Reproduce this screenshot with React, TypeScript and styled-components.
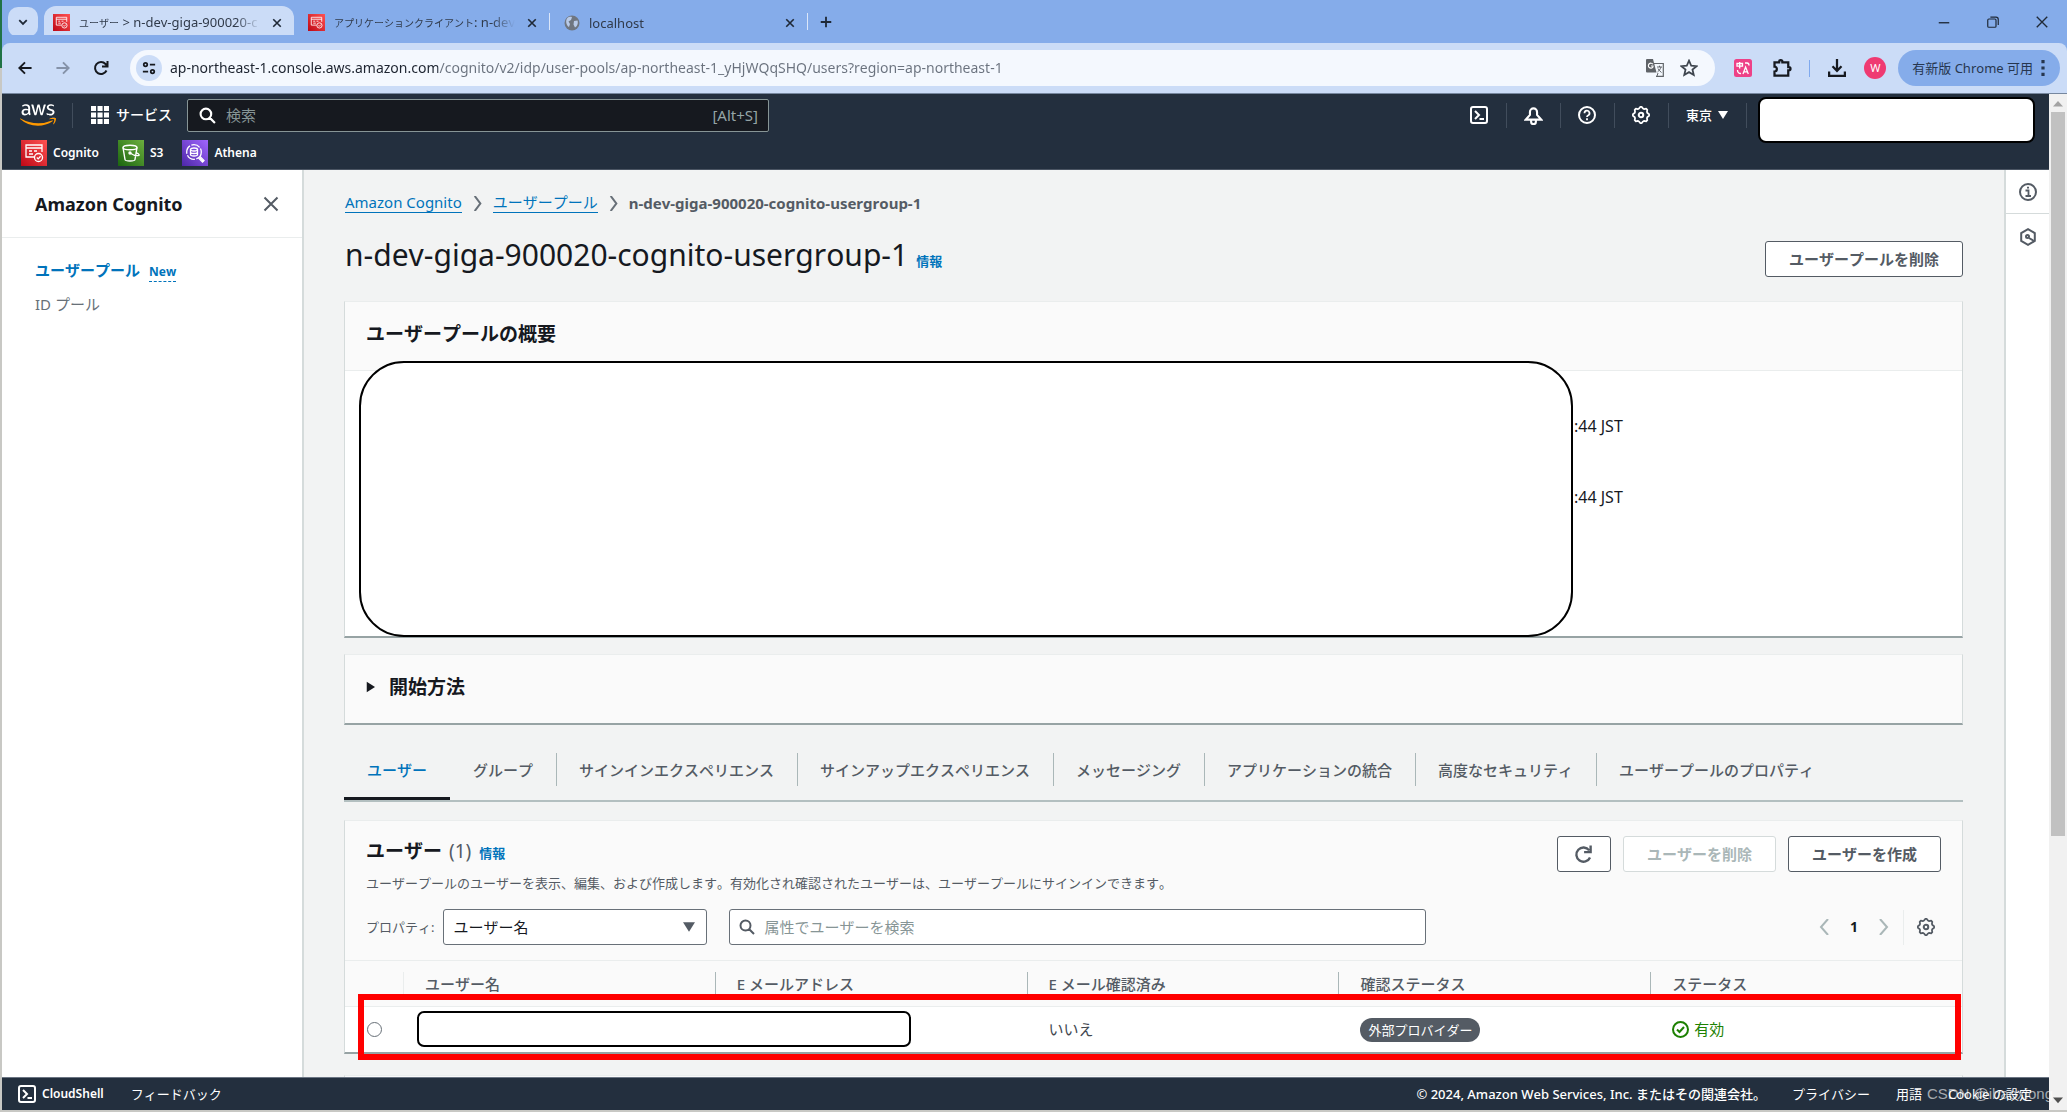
import React from "react";
import styled, { createGlobalStyle, css } from "styled-components";
import { FaAws } from "react-icons/fa";

const GlobalStyle = createGlobalStyle`
  *, *::before, *::after { box-sizing: border-box; }
  html, body { margin: 0; padding: 0; }
  body {
    font-family: "Noto Sans", "Noto Sans CJK JP", sans-serif;
    font-size: 15px;
    font-kerning: none;
    line-height: 24px;
    color: #16191f;
    overflow: hidden;
  }
  button, input, select { font: inherit; font-kerning: none; color: inherit; margin: 0; }
  button { cursor: pointer; border: 0; background: none; padding: 0; }
  a { text-decoration: none; color: #0073bb; }
  svg { display: block; flex: none; }
  h1, h2, p { margin: 0; }
`;

/* ---------- browser frame ---------- */

const Frame = styled.div`
  display: flex;
  flex-direction: column;
  height: 100vh;
  padding: 0 0 2px 2px;
  background: linear-gradient(#217346 68px, #c8c8c4 68px);
`;

const TabStrip = styled.div`
  display: flex;
  align-items: center;
  height: 43px;
  background: #85acea;
  padding-left: 6px;
  color: #1f2937;
`;

const TabSearch = styled.button`
  display: grid;
  place-items: center;
  width: 30px;
  height: 30px;
  border-radius: 10px;
  background: #cbdcf7;
`;

const Tab = styled.div<{ $active?: boolean; $width: number }>`
  display: flex;
  align-items: center;
  gap: 9px;
  width: ${(p) => p.$width}px;
  align-self: stretch;
  margin-top: 6px;
  margin-left: ${(p) => (p.$active ? 6 : 0)}px;
  padding: 0 9px 4px ${(p) => (p.$active ? 9 : 14)}px;
  border-radius: 12px 12px 0 0;
  background: ${(p) => (p.$active ? "#cbdcf7" : "transparent")};
`;

const TabTitle = styled.button`
  flex: 1;
  min-width: 0;
  overflow: hidden;
  white-space: nowrap;
  text-align: left;
  font-size: 13px;
  line-height: 20px;
  color: #303a4a;
  mask-image: linear-gradient(90deg, #000 calc(100% - 24px), transparent);
`;

const Kana = styled.span`
  font-size: 10px;
`;

const IconButton = styled.button<{ $w?: number }>`
  display: grid;
  place-items: center;
  width: ${(p) => p.$w ?? 24}px;
  height: 24px;
  flex: none;
`;

const Divider = styled.span<{ $color?: string; $h?: number }>`
  width: 1px;
  height: ${(p) => p.$h ?? 17}px;
  flex: none;
  background: ${(p) => p.$color ?? "#dbe6f9"};
`;

const WindowControls = styled.div`
  display: flex;
  gap: 25px;
  margin-left: auto;
  padding-right: 13px;
`;

const Toolbar = styled.div`
  display: flex;
  align-items: center;
  height: 51px;
  padding: 0 7px 0 11px;
  background: #cbdcf7;
  border-bottom: 1px solid #76879f;
  border-radius: 8px 8px 0 0;
  box-shadow: 0 -8px 0 0 #85acea;
`;

const HistoryButtons = styled.div`
  display: flex;
  gap: 14px;
  margin-right: 17px;
`;

const Omnibox = styled.label`
  display: flex;
  flex: 1;
  align-items: center;
  height: 36px;
  padding: 0 12px 0 6px;
  border-radius: 18px;
  background: #f4f8fe;
`;

const SiteInfo = styled.span`
  display: grid;
  place-items: center;
  width: 26px;
  height: 26px;
  border-radius: 13px;
  background: #cbdcf7;
`;

const Address = styled.input`
  flex: 1;
  min-width: 0;
  padding: 0 8px;
  border: 0;
  outline: 0;
  font-size: 14px;
  color: #5d6673;
  background: linear-gradient(90deg, #1d2430 276px, #6a727e 276px);
  background-clip: text;
  -webkit-text-fill-color: transparent;
`;

const ToolbarIcons = styled.div`
  display: flex;
  align-items: center;
  gap: 15px;
  padding: 0 12px 0 16px;
`;

const Avatar = styled.span`
  width: 22px;
  height: 22px;
  border-radius: 50%;
  background: #ef3a72;
  color: #fff;
  font-size: 11px;
  line-height: 22px;
  text-align: center;
`;

const UpdatePill = styled.button`
  display: flex;
  align-items: center;
  gap: 2px;
  height: 36px;
  padding: 0 9px 0 14px;
  border-radius: 18px;
  background: #85acea;
  color: #26364f;
  font-family: "Noto Sans", "Noto Sans CJK SC", sans-serif;
  font-size: 13px;
  white-space: nowrap;
`;

const Viewport = styled.div`
  display: flex;
  flex: 1;
  min-height: 0;
`;

const ScrollTrack = styled.div`
  display: flex;
  flex-direction: column;
  align-items: center;
  width: 18px;
  padding: 5px 0;
  background: #f1f1f1;
`;

const ScrollThumb = styled.div`
  width: 14px;
  flex: 0 0 72%;
  margin: 3px 0 auto;
  background: #c1c1c1;
`;

/* ---------- console navigation ---------- */

const Console = styled.div`
  display: flex;
  flex: 1;
  flex-direction: column;
  min-width: 0;
`;

const Nav = styled.header`
  background: #232f3e;
  color: #fff;
  border-bottom: 1px solid #4b5563;
`;

const NavRow = styled.div`
  display: flex;
  align-items: center;
  height: 42px;
  padding: 0 14px 0 18px;
`;

const AwsLogo = styled.a`
  display: flex;
  margin-right: 16px;
  svg path { fill: url(#awsFill); }
`;

const Services = styled.button`
  display: flex;
  align-items: center;
  gap: 7px;
  margin: 0 15px 0 18px;
  font-size: 14px;
  font-weight: 500;
  color: #fff;
`;

const NavSearch = styled.label`
  display: flex;
  align-items: center;
  gap: 10px;
  width: 582px;
  height: 33px;
  padding: 0 10px 0 11px;
  border: 1px solid #879596;
  border-radius: 2px;
  background: #16191f;
  color: #95a5a6;
`;

const PlainInput = styled.input`
  flex: 1;
  min-width: 0;
  padding: 0;
  border: 0;
  outline: 0;
  background: transparent;
  &::placeholder { color: #879596; opacity: 1; }
`;

const NavTools = styled.div`
  display: flex;
  align-items: center;
  gap: 15px;
  margin-left: auto;
  > button:not(:last-of-type) { width: 23px; }
`;

const Region = styled.button`
  display: flex;
  align-items: center;
  gap: 6px;
  margin: 0 3px 0 2px;
  font-size: 13px;
  font-weight: 500;
`;

/* blank rounded covers over private values */
const cover = css`
  border: 2px solid #000;
  background: #fff;
`;

const AccountCover = styled.div`
  ${cover}
  width: 277px;
  height: 46px;
  margin: 5px 0 -4px -4px;
  border-radius: 8px;
`;

const Favorites = styled.nav`
  display: flex;
  align-items: flex-start;
  gap: 19px;
  height: 33px;
  padding: 4px 19px 0;
`;

const Favorite = styled.a`
  display: flex;
  align-items: center;
  gap: 6px;
  color: #fff;
  font-size: 12px;
  font-weight: 600;
`;

/* ---------- page body ---------- */

const Body = styled.div`
  display: flex;
  flex: 1;
  min-height: 0;
  overflow: hidden;
  background: #f2f3f3;
`;

const Side = styled.aside`
  width: 302px;
  flex: none;
  background: #fff;
  border-right: 2px solid #d5dbdb;
`;

const SideHeader = styled.div`
  display: flex;
  align-items: center;
  justify-content: space-between;
  height: 68px;
  padding: 0 19px 0 33px;
  border-bottom: 1px solid #eaeded;
  font-size: 18px;
  font-weight: 700;
`;

const SideList = styled.ul`
  display: flex;
  flex-direction: column;
  gap: 8px;
  margin: 0;
  padding: 20px 33px;
  list-style: none;
`;

const SideLink = styled.a<{ $active?: boolean }>`
  color: ${(p) => (p.$active ? "#0073bb" : "#687078")};
  font-weight: ${(p) => (p.$active ? 700 : 400)};
`;

const NewBadge = styled.a`
  margin-left: 9px;
  font-size: 12px;
  font-weight: 700;
  border-bottom: 1px dashed #0073bb;
  padding-bottom: 1px;
`;

const Main = styled.main`
  flex: 1;
  min-width: 0;
  padding: 21px 41px 0 40px;
  overflow: hidden;
`;

const Crumbs = styled.nav`
  display: flex;
  align-items: center;
  gap: 8px;
  height: 24px;
  padding-left: 1px;
  line-height: 19px;
  a { color: #0073bb; border-bottom: 1px solid #0073bb; }
  span { color: #545b64; font-weight: 700; }
`;

const TitleRow = styled.div`
  display: flex;
  align-items: flex-start;
  justify-content: space-between;
  height: 86px;
  padding: 18px 0 0 1px;
`;

const Title = styled.h1`
  font-size: 30px;
  line-height: 44px;
  font-weight: 400;
`;

const InfoLink = styled.a`
  margin-left: 8px;
  font-size: 13px;
  font-weight: 700;
`;

const Button = styled.button<{ $push?: number }>`
  height: 36px;
  padding: 0 23px;
  margin-top: ${(p) => p.$push ?? 0}px;
  border: 1px solid #545b64;
  border-radius: 3px;
  background: #fff;
  color: #545b64;
  font-size: 15px;
  font-weight: 700;
  white-space: nowrap;
  &:disabled { border-color: #d5dbdb; color: #aab7b8; cursor: default; }
`;

const Card = styled.section<{ $gap?: number }>`
  margin-bottom: ${(p) => p.$gap ?? 0}px;
  background: #fff;
  border: 1px solid #d5dbdb;
  border-top-color: #eaeded;
  border-bottom: 2px solid #97a3a4;
`;

const CardTitle = styled.h2`
  font-size: 19px;
  line-height: 28px;
  font-weight: 700;
`;

const OverviewHeader = styled.div`
  padding: 18px 21px 22px;
  border-bottom: 1px solid #eaeded;
  background: #fafafa;
`;

const OverviewBody = styled.div`
  display: flex;
  height: 265px;
  padding-left: 14px;
`;

const OverviewCover = styled.div`
  ${cover}
  position: relative;
  flex: 0 0 76%;
  max-width: 1214px;
  margin: -10px 0 -1px;
  border-radius: 45px;
`;

const Dates = styled.div`
  display: flex;
  flex-direction: column;
  gap: 47px;
  padding: 43px 0 0 1px;
  font-size: 16px;
`;

const Expander = styled.button`
  display: flex;
  align-items: center;
  gap: 11px;
  width: 100%;
  padding: 18px 21px 22px;
  background: #fafafa;
`;

const Tabs = styled.div`
  display: flex;
  height: 59px;
  margin-bottom: 18px;
  border-bottom: 2px solid #b3bfc0;
`;

const PageTab = styled.button<{ $active?: boolean }>`
  display: flex;
  align-items: flex-start;
  padding-top: 10px;
  font-weight: 500;
  color: ${(p) => (p.$active ? "#0073bb" : "#545b64")};
  border-bottom: 3px solid ${(p) => (p.$active ? "#16191f" : "transparent")};
  span {
    padding: 5px 23px 4px 22px;
    line-height: 24px;
    border-left: 1px solid transparent;
    white-space: nowrap;
  }
  & + & span { border-left-color: #aab7b8; }
`;

const UsersTop = styled.div`
  padding: 15px 21px 0;
  background: #fafafa;
`;

const UsersHeading = styled.div`
  display: flex;
  justify-content: space-between;
`;

const UsersTitle = styled(CardTitle)`
  line-height: 30px;
`;

const Counter = styled.span`
  margin-left: 7px;
  color: #545b64;
  font-weight: 400;
`;

const Description = styled.p`
  margin-top: 5px;
  color: #545b64;
  font-size: 13px;
  line-height: 20px;
`;

const Actions = styled.div`
  display: flex;
  gap: 12px;
`;

const SquareButton = styled(Button)`
  display: grid;
  place-items: center;
  width: 54px;
  padding: 0;
`;

const FilterRow = styled.div`
  display: flex;
  align-items: center;
  padding: 16px 0 15px;
`;

const FieldLabel = styled.label`
  color: #545b64;
  font-size: 13px;
  margin-right: 9px;
`;

const SelectWrap = styled.div`
  display: grid;
  width: 264px;
  margin-right: 22px;
  align-items: center;
  > * { grid-area: 1 / 1; }
  > svg { justify-self: end; margin-right: 12px; pointer-events: none; }
`;

const Select = styled.select`
  appearance: none;
  width: 100%;
  height: 36px;
  padding: 0 9px;
  border: 1px solid #687078;
  border-radius: 3px;
  background: #fff;
`;

const FilterSearch = styled.label`
  display: flex;
  align-items: center;
  gap: 9px;
  flex: 0 0 697px;
  height: 36px;
  padding: 0 9px;
  border: 1px solid #687078;
  border-radius: 3px;
  background: #fff;
`;

const Pager = styled.div`
  display: flex;
  align-items: center;
  gap: 7px;
  margin-left: auto;
  font-weight: 700;
  font-size: 14px;
`;

const PageNumber = styled.span`
  margin: 0 7px;
`;

const TableWrap = styled.div`
  position: relative;
`;

const Table = styled.table`
  width: 100%;
  table-layout: fixed;
  border-collapse: collapse;
  th {
    height: 46px;
    padding: 0;
    background: #fafafa;
    border-top: 1px solid #eaeded;
    border-bottom: 1px solid #eaeded;
    color: #545b64;
    font-weight: 500;
    text-align: left;
  }
  th > div { padding-left: 21px; border-left: 1px solid #aab7b8; height: 24px; }
  th:nth-child(2) > div { border-left-color: #eaeded; }
  th:first-child { width: 58px; }
  td { height: 45px; padding: 0 0 0 22px; font-size: 15px; color: #414750; }
`;

const Hint = styled.span`
  display: inline-block;
  line-height: 21px;
  border-bottom: 2px dotted #aab7b8;
`;

const Radio = styled.input`
  appearance: none;
  display: block;
  width: 15px;
  height: 15px;
  margin: 0;
  border: 1px solid #687078;
  border-radius: 50%;
  background: #fff;
`;

/* red frame drawn over the selected row */
const RowMark = styled.div`
  position: absolute;
  inset: 34px 1px -8px 13px;
  border: 6px solid #f00;
  pointer-events: none;
`;

const NameCover = styled.div`
  ${cover}
  position: relative;
  width: 494px;
  height: 36px;
  margin-left: -8px;
  border-radius: 7px;
`;

const Pill = styled.span`
  display: inline-block;
  padding: 0 8px;
  border-radius: 12px;
  background: #545b64;
  color: #fff;
  font-size: 13px;
  line-height: 24px;
  vertical-align: middle;
`;

const Status = styled.span`
  display: flex;
  align-items: center;
  gap: 5px;
  color: #1d8102;
`;

const Rail = styled.aside`
  width: 45px;
  flex: none;
  background: #fff;
  border-left: 2px solid #d5dbdb;
  button {
    display: grid;
    place-items: center;
    width: 100%;
    height: 43px;
  }
  button + button { border-top: 1px solid #d5dbdb; height: 46px; }
`;

const Footer = styled.footer`
  position: relative;
  display: flex;
  align-items: center;
  height: 33px;
  padding: 0 17px 0 16px;
  background: #232f3e;
  border-top: 1px solid #6b7583;
  color: #fff;
  font-size: 13px;
  a, button { color: #fff; }
`;

const ShellButton = styled.button`
  display: flex;
  align-items: center;
  gap: 6px;
  font-size: 12px;
  font-weight: 600;
  margin-right: 27px;
`;

const Legal = styled.div`
  display: flex;
  gap: 26px;
  margin-left: auto;
`;

const Copyright = styled.span`
  font-weight: 500;
`;

const Watermark = styled.span`
  position: absolute;
  right: -4px;
  bottom: 4px;
  color: rgba(255, 255, 255, 0.6);
  font-family: "Liberation Sans", sans-serif;
  font-size: 15px;
`;

/* ---------- drawings ---------- */

type Shape = { d: string; size?: number; color?: string; w?: number; fill?: boolean };
const Glyph = ({ d, size = 16, color = "currentColor", w = 2, fill }: Shape) => (
  <svg width={size} height={size} viewBox="0 0 16 16" fill={fill ? color : "none"} stroke={fill ? "none" : color} strokeWidth={w} aria-hidden="true">
    <path d={d} />
  </svg>
);

const CROSS = "M2 2 14 14M14 2 2 14";
const gearPath = (() => {
  const pts: string[] = [];
  const n = 8;
  for (let i = 0; i < n * 4; i++) {
    const r = i % 4 < 2 ? 7.2 : 6;
    const a = ((i - 0.5) / (n * 4)) * Math.PI * 2 - Math.PI / 2;
    pts.push(`${(8 + r * Math.cos(a)).toFixed(2)} ${(8 + r * Math.sin(a)).toFixed(2)}`);
  }
  return `M${pts.join("L")}Z`;
})();

const Gear = ({ color = "currentColor" }: { color?: string }) => (
  <svg width="18" height="18" viewBox="0 0 16 16" fill="none" stroke={color} strokeLinejoin="round" aria-hidden="true">
    <path d={gearPath} strokeWidth="1.6" />
    <circle cx="8" cy="8" r="2" strokeWidth="1.8" />
  </svg>
);

const Magnifier = ({ size = 16, color }: { size?: number; color: string }) => (
  <Glyph size={size} color={color} d="M11.5 6.5a5 5 0 1 1-10 0 5 5 0 0 1 10 0ZM10 10l5 5" />
);

const Shell = () => (
  <svg width="18" height="18" viewBox="0 0 18 18" fill="none" stroke="currentColor" strokeWidth="2" aria-hidden="true">
    <rect x="1" y="1" width="16" height="16" rx="2" />
    <path d="m5 5 4 4-4 4M9.5 13H14" />
  </svg>
);

const CognitoIcon = ({ size = 26 }: { size?: number }) => (
  <svg width={size} height={size} viewBox="0 0 26 26" fill="none" stroke="#fff" strokeWidth="1.3" aria-hidden="true">
    <defs>
      <linearGradient id={`cg${size}`} x1="0" y1="1" x2="1" y2="0"><stop stopColor="#bd0816" /><stop offset="1" stopColor="#ff5252" /></linearGradient>
    </defs>
    <rect width="26" height="26" fill={`url(#cg${size})`} stroke="none" />
    <path d="M13 17H5V5h16v7M5 8h16M8 11h3M13 11h3M8 14h4" />
    <circle cx="17.5" cy="17.5" r="4" />
    <path d="m15.8 17.5 1.4 1.4 2.4-2.6" />
  </svg>
);

const S3Icon = () => (
  <svg width="26" height="26" viewBox="0 0 26 26" fill="none" stroke="#fff" strokeWidth="1.4" aria-hidden="true">
    <defs>
      <linearGradient id="s3g" x1="0" y1="1" x2="1" y2="0"><stop stopColor="#1b660f" /><stop offset="1" stopColor="#6cae3e" /></linearGradient>
    </defs>
    <rect width="26" height="26" fill="url(#s3g)" stroke="none" />
    <ellipse cx="12" cy="7.5" rx="7" ry="2.3" />
    <path d="m5 7.5 2 12c.3 2 9.700 2 10 0l2-12M12 13c3 2 7 3 9 2.300.6-1-1.500-2.200-3.500-3" />
    <circle cx="12" cy="13" r="1" fill="#fff" />
  </svg>
);

const AthenaIcon = () => (
  <svg width="26" height="26" viewBox="0 0 26 26" fill="none" stroke="#fff" strokeWidth="1.3" aria-hidden="true">
    <defs>
      <linearGradient id="atg" x1="0" y1="1" x2="1" y2="0"><stop stopColor="#4d27a8" /><stop offset="1" stopColor="#a166ff" /></linearGradient>
    </defs>
    <rect width="26" height="26" fill="url(#atg)" stroke="none" />
    <circle cx="12" cy="12" r="7.300" strokeDasharray="9 1.500" />
    <ellipse cx="12" cy="9.500" rx="3.500" ry="1.500" />
    <path d="M8.500 9.500v5c0 2 7 2 7 0v-5M8.500 12c0 2 7 2 7 0M17.500 17.500l4 4" />
    <path d="m18 16.500 4 4-1.500 1.500-4-4" />
  </svg>
);

const Globe = () => (
  <svg width="16" height="16" viewBox="0 0 16 16" aria-hidden="true">
    <circle cx="8" cy="8" r="7.500" fill="#6f7680" />
    <path d="M3 3.500c2-2 4-1.800 5-1.300L7 5 4.500 6.500 6 9l-1 3C2 10 1.500 6 3 3.500ZM10 6l3.500-.5c1 3-.5 6-2.500 7L9.500 9.500Z" fill="#b9cbe8" />
  </svg>
);

const Caret = ({ w = 10, color = "currentColor" }: { w?: number; color?: string }) => (
  <svg width={w} height={w - 2} viewBox="0 0 10 8" fill={color} aria-hidden="true"><path d="M0 0h10L5 8Z" /></svg>
);

/* ---------- data ---------- */

const pageTabs = [
  "ユーザー",
  "グループ",
  "サインインエクスペリエンス",
  "サインアップエクスペリエンス",
  "メッセージング",
  "アプリケーションの統合",
  "高度なセキュリティ",
  "ユーザープールのプロパティ",
];

const TabClose = () => (
  <IconButton $w={16} aria-label="閉じる"><Glyph size={10} w={2.6} d={CROSS} /></IconButton>
);

const BrowserTabs = () => (
  <TabStrip>
    <TabSearch aria-label="タブを検索"><Glyph size={12} w={2.4} d="m3 5.500 5 5 5-5" /></TabSearch>
    <Tab $active $width={250}>
      <CognitoIcon size={17} />
      <TabTitle><Kana>ユーザー</Kana> &gt; n-dev-giga-900020-c</TabTitle>
      <TabClose />
    </Tab>
    <Tab $width={255}>
      <CognitoIcon size={17} />
      <TabTitle><Kana>アプリケーションクライアント</Kana>: n-dev-</TabTitle>
      <TabClose />
    </Tab>
    <Divider />
    <Tab $width={257}>
      <Globe />
      <TabTitle>localhost</TabTitle>
      <TabClose />
    </Tab>
    <Divider />
    <IconButton $w={36} aria-label="新しいタブ"><Glyph size={12} w={2.4} d="M8 1v14M1 8h14" /></IconButton>
    <WindowControls>
      <IconButton aria-label="最小化"><Glyph size={12} w={1.8} d="M1 9h14" /></IconButton>
      <IconButton aria-label="元に戻す"><Glyph size={12} w={1.6} d="M1 5.500Q1 4 2.500 4h8Q12 4 12 5.500v8q0 1.500-1.500 1.500h-8Q1 15 1 13.500ZM4.500 1.500H12q3 0 3 3V12" /></IconButton>
      <IconButton aria-label="閉じる"><Glyph size={14} w={1.6} d={CROSS} /></IconButton>
    </WindowControls>
  </TabStrip>
);

const BrowserToolbar = () => (
  <Toolbar>
    <HistoryButtons>
      <IconButton aria-label="戻る"><Glyph size={14} w={2.2} d="M15.500 8H2M8 1.500 1.500 8 8 14.500" /></IconButton>
      <IconButton aria-label="進む"><Glyph size={14} w={2.2} color="#8592a8" d="M.5 8H14M8 1.500 14.500 8 8 14.500" /></IconButton>
      <IconButton aria-label="再読み込み"><Glyph size={16} w={2} d="M13.500 10.500A6 6 0 1 1 12.500 4L14 5.500M14.500 1v5.500H9" /></IconButton>
    </HistoryButtons>
    <Omnibox>
      <SiteInfo><Glyph size={14} w={2} d="M9 4h6M1 12h6M6 4a2 2 0 1 1-4 0 2 2 0 0 1 4 0ZM14 12a2 2 0 1 1-4 0 2 2 0 0 1 4 0Z" /></SiteInfo>
      <Address aria-label="アドレス" type="text" spellCheck={false} defaultValue="ap-northeast-1.console.aws.amazon.com/cognito/v2/idp/user-pools/ap-northeast-1_yHjWQqSHQ/users?region=ap-northeast-1" />
      <IconButton $w={40} aria-label="翻訳">
        <svg width="18" height="18" viewBox="0 0 18 18" fill="none" aria-hidden="true">
          <path d="M7 4.500h10.300v12.800H10" stroke="#5f6368" strokeWidth="1.200" />
          <path d="M1 0h6l3.500 13.500H1a1 1 0 0 1-1-1V1a1 1 0 0 1 1-1Z" fill="#5f6368" />
          <path d="M7 5.300A2.500 2.500 0 1 0 7 8V7H5" stroke="#fff" strokeWidth="1.100" />
          <path d="M11 8h5M13.500 6.700V8M15 8c-.6 2-2 4-3.500 5M12 9.500c.8 1.500 2 3 3.500 4M11 17l1-3" stroke="#5f6368" strokeWidth="1" />
        </svg>
      </IconButton>
      <IconButton $w={28} aria-label="ブックマーク"><Glyph size={18} w={1.6} color="#3f464f" d="m8 1.500 2 4.500 4.700.4-3.600 3.100 1.100 4.700L8 11.700l-4.200 2.500 1.100-4.700L1.300 6.400 6 6Z" /></IconButton>
    </Omnibox>
    <ToolbarIcons>
      <IconButton aria-label="翻訳拡張機能">
        <svg width="18" height="18" viewBox="0 0 18 18" fill="none" stroke="#fff" strokeWidth="1.300" aria-hidden="true">
          <rect width="18" height="18" rx="2.500" fill="#ee4187" stroke="none" />
          <path d="M3 4.500h5.500v2.700H3ZM5.700 3v6.500M11 4h2q2 0 2 2.500M3.500 11q0 3.500 3.500 3.500M9 15l2.600-7 2.700 7M10 12.800h3.200" />
        </svg>
      </IconButton>
      <IconButton aria-label="拡張機能"><Glyph size={20} w={1.8} d="M2 3.500h3.700V3a1.300 1.300 0 0 1 2.600 0v.5H13v3.700h.5a1.300 1.300 0 0 1 0 2.600H13v4.200H2v-3.200c2.500 0 2.500-3.900 0-3.900Z" /></IconButton>
      <Divider $color="#7fa9ee" />
      <IconButton aria-label="ダウンロード"><Glyph size={18} w={2} d="M8 0v10M4 6.500l4 4 4-4M1 11v4h14v-4" /></IconButton>
      <Avatar>W</Avatar>
    </ToolbarIcons>
    <UpdatePill>
      有新版 Chrome 可用
      <Glyph size={16} fill d="M6.400 0h3.200v3.200H6.400ZM6.400 6.400h3.200v3.200H6.400ZM6.400 12.800h3.200V16H6.400Z" />
    </UpdatePill>
  </Toolbar>
);

const navLine = <Divider $color="#414d5c" $h={25} />;

const ConsoleNav = () => (
  <Nav>
    <NavRow>
      <AwsLogo href="#" aria-label="AWS">
        <svg width="0" height="0" aria-hidden="true">
          <defs>
            <linearGradient id="awsFill" x1="0" y1="0" x2="0" y2="1">
              <stop offset="0.630" stopColor="#fff" />
              <stop offset="0.630" stopColor="#ff9900" />
            </linearGradient>
          </defs>
        </svg>
        <FaAws size={36} />
      </AwsLogo>
      {navLine}
      <Services>
        <Glyph size={18} fill d="M0 0h4.500v4.500H0ZM5.800 0h4.500v4.500H5.800ZM11.500 0H16v4.500h-4.500ZM0 5.800h4.500v4.500H0ZM5.800 5.800h4.500v4.500H5.800ZM11.500 5.800H16v4.500h-4.500ZM0 11.500h4.500V16H0ZM5.800 11.500h4.500V16H5.800ZM11.500 11.500H16V16h-4.500Z" />
        サービス
      </Services>
      <NavSearch>
        <Magnifier size={17} color="#fff" />
        <PlainInput type="search" placeholder="検索" aria-label="検索" />
        <span>[Alt+S]</span>
      </NavSearch>
      <NavTools>
        <IconButton aria-label="CloudShell"><Shell /></IconButton>
        {navLine}
        <IconButton aria-label="通知"><Glyph size={19} w={1.8} d="M1.500 11.500h13L11 7.500V5a3 3 0 0 0-6 0v2.500ZM6 12v1.500a2 1.800 0 0 0 4 0V12" /></IconButton>
        {navLine}
        <IconButton aria-label="ヘルプ">
          <svg width="18" height="18" viewBox="0 0 18 18" fill="none" stroke="currentColor" strokeWidth="2" aria-hidden="true">
            <circle cx="9" cy="9" r="8" /><path d="M6.500 7.200a2.500 2.500 0 1 1 3.500 2.300q-1 .5-1 1.500M9 12.200v2" strokeWidth="1.800" />
          </svg>
        </IconButton>
        {navLine}
        <IconButton aria-label="設定"><Gear /></IconButton>
        {navLine}
        <Region>東京 <Caret /></Region>
        {navLine}
        <AccountCover />
      </NavTools>
    </NavRow>
    <Favorites>
      <Favorite href="#"><CognitoIcon />Cognito</Favorite>
      <Favorite href="#"><S3Icon />S3</Favorite>
      <Favorite href="#"><AthenaIcon />Athena</Favorite>
    </Favorites>
  </Nav>
);

const CrumbArrow = () => <Glyph size={15} w={2.2} color="#687078" d="m5 0 6 8-6 8" />;

const UsersTable = () => (
  <TableWrap>
    <Table>
      <thead>
        <tr>
          <th aria-label="選択" />
          <th><div>ユーザー名</div></th>
          <th><div>E メールアドレス</div></th>
          <th><div>E メール確認済み</div></th>
          <th><div><Hint>確認ステータス</Hint></div></th>
          <th><div>ステータス</div></th>
        </tr>
      </thead>
      <tbody>
        <tr>
          <td><Radio type="radio" name="user" aria-label="ユーザーを選択" /></td>
          <td><NameCover /></td>
          <td />
          <td>いいえ</td>
          <td><Pill>外部プロバイダー</Pill></td>
          <td>
            <Status>
              <svg width="17" height="17" viewBox="0 0 17 17" fill="none" stroke="currentColor" strokeWidth="2" aria-hidden="true">
                <circle cx="8.500" cy="8.500" r="7.500" /><path d="m5 8.500 2.500 2.500L12 6" />
              </svg>
              有効
            </Status>
          </td>
        </tr>
      </tbody>
    </Table>
    <RowMark />
  </TableWrap>
);

export default function App() {
  return (
    <Frame>
      <GlobalStyle />
      <BrowserTabs />
      <BrowserToolbar />
      <Viewport>
        <Console>
          <ConsoleNav />
          <Body>
            <Side>
              <SideHeader>
                Amazon Cognito
                <IconButton aria-label="閉じる"><Glyph size={16} w={2} color="#545b64" d="M1.500 1.500 14.500 14.500M14.500 1.500 1.500 14.500" /></IconButton>
              </SideHeader>
              <SideList>
                <li><SideLink href="#" $active>ユーザープール</SideLink><NewBadge href="#">New</NewBadge></li>
                <li><SideLink href="#">ID プール</SideLink></li>
              </SideList>
            </Side>
            <Main>
              <Crumbs>
                <a href="#">Amazon Cognito</a>
                <CrumbArrow />
                <a href="#">ユーザープール</a>
                <CrumbArrow />
                <span>n-dev-giga-900020-cognito-usergroup-1</span>
              </Crumbs>
              <TitleRow>
                <Title>n-dev-giga-900020-cognito-usergroup-1<InfoLink href="#">情報</InfoLink></Title>
                <Button $push={8}>ユーザープールを削除</Button>
              </TitleRow>
              <Card $gap={16}>
                <OverviewHeader><CardTitle>ユーザープールの概要</CardTitle></OverviewHeader>
                <OverviewBody>
                  <OverviewCover />
                  <Dates><span>:44 JST</span><span>:44 JST</span></Dates>
                </OverviewBody>
              </Card>
              <Card $gap={18}>
                <Expander aria-expanded="false">
                  <Glyph size={12} fill d="M1 1v14l11-7Z" />
                  <CardTitle as="span">開始方法</CardTitle>
                </Expander>
              </Card>
              <Tabs role="tablist">
                {pageTabs.map((t, i) => (
                  <PageTab key={t} role="tab" aria-selected={i === 0} $active={i === 0}><span>{t}</span></PageTab>
                ))}
              </Tabs>
              <Card $gap={21}>
                <UsersTop>
                  <UsersHeading>
                    <div>
                      <UsersTitle>ユーザー<Counter>(1)</Counter><InfoLink href="#">情報</InfoLink></UsersTitle>
                      <Description>ユーザープールのユーザーを表示、編集、および作成します。有効化され確認されたユーザーは、ユーザープールにサインインできます。</Description>
                    </div>
                    <Actions>
                      <SquareButton aria-label="更新"><Glyph size={19} w={2} d="M13.500 10.500A6 6 0 1 1 12.800 4.500M14 .5V6H8.500" /></SquareButton>
                      <Button disabled>ユーザーを削除</Button>
                      <Button>ユーザーを作成</Button>
                    </Actions>
                  </UsersHeading>
                  <FilterRow>
                    <FieldLabel htmlFor="prop">プロパティ:</FieldLabel>
                    <SelectWrap>
                      <Select id="prop" defaultValue="name"><option value="name">ユーザー名</option></Select>
                      <Caret w={12} color="#545b64" />
                    </SelectWrap>
                    <FilterSearch>
                      <Magnifier color="#545b64" />
                      <PlainInput type="search" placeholder="属性でユーザーを検索" aria-label="属性でユーザーを検索" />
                    </FilterSearch>
                    <Pager>
                      <IconButton aria-label="前のページ"><Glyph size={16} color="#aab7b8" d="M12 0 5 8l7 8" /></IconButton>
                      <PageNumber>1</PageNumber>
                      <IconButton aria-label="次のページ"><Glyph size={16} color="#aab7b8" d="m4 0 7 8-7 8" /></IconButton>
                      <Divider $color="#eaeded" $h={35} />
                      <IconButton $w={30} aria-label="設定"><Gear color="#545b64" /></IconButton>
                    </Pager>
                  </FilterRow>
                </UsersTop>
                <UsersTable />
              </Card>
              <Card><OverviewHeader /></Card>
            </Main>
            <Rail>
              <button aria-label="情報">
                <svg width="18" height="18" viewBox="0 0 18 18" fill="none" stroke="#545b64" strokeWidth="2" aria-hidden="true">
                  <circle cx="9" cy="9" r="8" /><path d="M6.500 7.500H9.500V13M6.500 13h5.500M8 4.700h2" strokeWidth="1.800" />
                </svg>
              </button>
              <button aria-label="診断">
                <svg width="18" height="18" viewBox="0 0 18 18" fill="none" stroke="#545b64" strokeWidth="2" aria-hidden="true">
                  <path d="m9 1.200 6.800 3.900v7.800L9 16.800l-6.800-3.900V5.100Z" /><circle cx="8.500" cy="8.500" r="1.500" /><path d="m10 10 5 3" />
                </svg>
              </button>
            </Rail>
          </Body>
          <Footer>
            <ShellButton><Shell />CloudShell</ShellButton>
            <button>フィードバック</button>
            <Legal>
              <Copyright>© 2024, Amazon Web Services, Inc. またはその関連会社。</Copyright>
              <a href="#">プライバシー</a>
              <a href="#">用語</a>
              <a href="#">Cookie の設定</a>
            </Legal>
            <Watermark>CSDN @ibaoxiong</Watermark>
          </Footer>
        </Console>
        <ScrollTrack>
          <Glyph size={10} fill color="#a3a3a3" d="M0 12 8 3l8 9Z" />
          <ScrollThumb />
          <Glyph size={10} fill color="#505050" d="M0 4h16l-8 9Z" />
        </ScrollTrack>
      </Viewport>
    </Frame>
  );
}
